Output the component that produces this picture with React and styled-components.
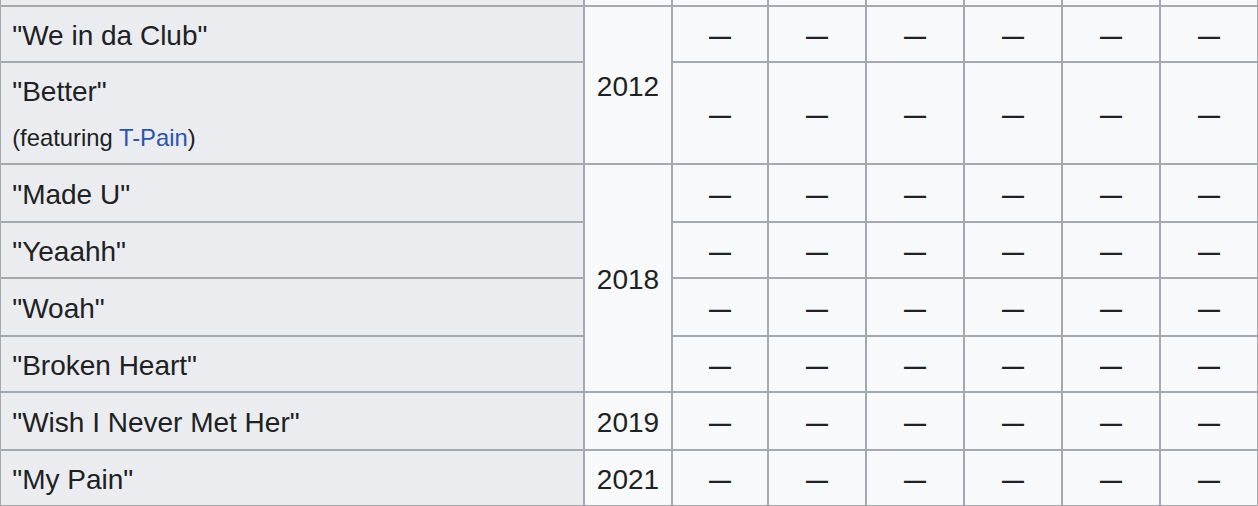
import React from "react";
import styled, {createGlobalStyle} from "styled-components";

const GlobalStyle = createGlobalStyle`
  html, body {
    margin: 0;
    padding: 0;
    background: #ffffff;
    overflow: hidden;
  }
  body {
    font-family: "Liberation Sans", Arial, Helvetica, sans-serif;
    color: #202122;
  }
`

const Table = styled.table`
  table-layout: fixed;
  border-collapse: separate;
  border-spacing: 0;
  width: 1260px;
  margin-left: -1px;
  font-size: 28px;
  line-height: 44.8px;
`
const Row = styled.tr`
  height: ${p => p.$h}px;
`
const Cell = styled.td`
  box-sizing: border-box;
  border-left: 2px solid #a2a9b1;
  border-top: 2px solid #a2a9b1;
  background: #f8f9fa;
  padding: 4px 11.2px 0;
  text-align: center;
  vertical-align: middle;
  &:last-child {
    border-right: 2px solid #a2a9b1;
  }
  tr:last-child > & {
    border-bottom: 2px solid #a2a9b1;
  }
`
const TitleCell = styled(Cell).attrs({as: "th", scope: "row"})`
  background: #eaecf0;
  text-align: left;
  font-weight: normal;
`
const StubCell = styled(Cell)`
  border-top: none;
  padding: 0;
  font-size: 0;
  line-height: 0;
  background: ${p => p.$head ? "#eaecf0" : "#f8f9fa"};
`
const Dash = styled.span`
  font-size: 22px;
  font-weight: bold;
  vertical-align: -1px;
`
const Featuring = styled.small`
  font-size: 23.8px;
  a {
    color: #2a55ae;
    text-decoration: none;
  }
`

const CHARTS = 6
const widths = [584, 88, 96, 98, 98, 98, 98, 100]

const songs = [
    {title: "We in da Club", year: "2012", span: 2, h: 56},
    {title: "Better", feat: "T-Pain", h: 102},
    {title: "Made U", year: "2018", span: 4, h: 58},
    {title: "Yeaahh", h: 56},
    {title: "Woah", h: 58},
    {title: "Broken Heart", h: 56},
    {title: "Wish I Never Met Her", year: "2019", span: 1, h: 58},
    {title: "My Pain", year: "2021", span: 1, h: 58},
]

const App = () => {
    return <>
        <GlobalStyle/>
        <Table>
            <colgroup>
                {widths.map((w, i) => <col key={i} style={{width: w}}/>)}
            </colgroup>
            <tbody>
            <Row $h={5}>
                <StubCell $head/>
                {widths.slice(1).map((w, i) => <StubCell key={i}/>)}
            </Row>
            {songs.map(s => <Row key={s.title} $h={s.h}>
                <TitleCell>
                    "{s.title}"
                    {s.feat && <>
                        <br/>
                        <Featuring>(featuring <a href="#">{s.feat}</a>)</Featuring>
                    </>}
                </TitleCell>
                {s.year && <Cell rowSpan={s.span}>{s.year}</Cell>}
                {Array.from({length: CHARTS}).map((_, i) => <Cell key={i}><Dash>—</Dash></Cell>)}
            </Row>)}
            </tbody>
        </Table>
    </>
}
export default App
